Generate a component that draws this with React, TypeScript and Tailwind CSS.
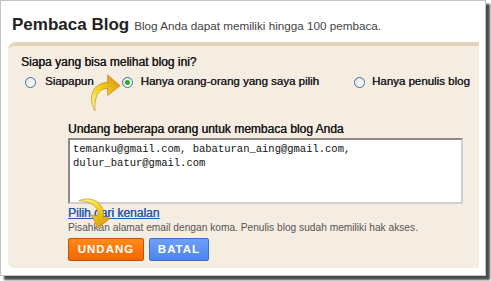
import React from 'react';

const Radio: React.FC<{ checked?: boolean }> = ({ checked }) => (
  <span className="inline-flex items-center justify-center w-[11px] h-[11px] rounded-full border border-[#3c6f9c] bg-gradient-to-br from-[#e6e6e6] to-white">
    {checked && <span className="w-[5px] h-[5px] rounded-full bg-[#2fa82f]" />}
  </span>
);

const CurvedArrow: React.FC<{ className: string; id: string }> = ({ className, id }) => (
  <svg viewBox="0 0 40 46" className={className}>
    <defs>
      <linearGradient id={id} x1="0" y1="1" x2="1" y2="0">
        <stop offset="0" stopColor="#fff7a0" />
        <stop offset="0.45" stopColor="#f2d21a" />
        <stop offset="1" stopColor="#d98a0c" />
      </linearGradient>
    </defs>
    <path
      d="M10 44 C2 30 6 14 24 12 L24 4 L38 16 L24 27 L24 19 C14 19 9 28 10 44 Z"
      fill={`url(#${id})`}
      stroke="#b07a10"
      strokeWidth="0.6"
    />
  </svg>
);

const App: React.FC = () => {
  return (
    <div className="w-[491px] h-[281px] bg-white relative" style={{ fontFamily: '"Liberation Sans", Arial, sans-serif' }}>
      <div className="w-[486px] h-[276px] bg-white border border-[#c4c4c4] shadow-[4px_4px_2px_#4a4a4a] flex flex-col">
        <div className="flex items-baseline gap-[5px] pl-[11px] pt-[11px] h-[41px] whitespace-nowrap">
          <span className="text-[17px] font-bold text-[#222]">Pembaca Blog</span>
          <span className="text-[11.7px] text-[#444]">Blog Anda dapat memiliki hingga 100 pembaca.</span>
        </div>
        <div className="ml-[7px] w-[471px] h-[226px] bg-[#f5ece2] border-t-4 border-[#e3d3bb] rounded-tl-[8px] rounded-bl-[6px] flex flex-col pl-[13px] pt-[9px] whitespace-nowrap">
          <div className="text-[12px] text-[#1a1a1a] leading-[14px] [text-shadow:0.3px_0_0_#1a1a1a]">Siapa yang bisa melihat blog ini?</div>
          <div className="flex items-center mt-[6px] h-[14px] text-[11.5px] text-[#222] [text-shadow:0.3px_0_0_#222]">
            <span className="ml-[4px] flex"><Radio /></span>
            <span className="ml-[9px]">Siapapun</span>
            <span className="ml-[28px] flex"><Radio checked /></span>
            <span className="ml-[8px]">Hanya orang-orang yang saya pilih</span>
            <span className="ml-[35px] flex"><Radio /></span>
            <span className="ml-[7px]">Hanya penulis blog</span>
          </div>
          <div className="flex flex-col ml-[47px] mt-[33px]">
            <div className="text-[12px] text-[#1a1a1a] leading-[14px] [text-shadow:0.3px_0_0_#1a1a1a]">Undang beberapa orang untuk membaca blog Anda</div>
            <div className="mt-[2px] w-[395px] h-[66px] bg-white border-2 border-[#8a8a8a] border-r-[#d0d0d0] border-b-[#d0d0d0] px-[3px] pt-[2px] text-[10.5px] leading-[14px] text-[#111]" style={{ fontFamily: '"Liberation Mono", "Courier New", monospace' }}>
              temanku@gmail.com, babaturan_aing@gmail.com,<br />dulur_batur@gmail.com
            </div>
            <a className="mt-[2px] text-[12px] text-[#2858b0] underline leading-[14px] [text-shadow:0.3px_0_0_#2858b0]">Pilih dari kenalan</a>
            <div className="mt-[1px] text-[10.2px] text-[#555] leading-[14px]">Pisahkan alamat email dengan koma. Penulis blog sudah memiliki hak akses.</div>
            <div className="flex gap-[5px] mt-[3px]">
              <button className="w-[76px] h-[23px] bg-gradient-to-b from-[#ff8a1a] to-[#f26600] border border-[#c85000] rounded-[2px] text-white text-[11.5px] font-bold tracking-[1px]">UNDANG</button>
              <button className="w-[60px] h-[23px] bg-gradient-to-b from-[#6ea0f8] to-[#4a84ee] border border-[#3a6ed0] rounded-[2px] text-white text-[11.5px] font-bold tracking-[1px]">BATAL</button>
            </div>
          </div>
        </div>
      </div>
      <CurvedArrow id="ga1" className="absolute left-[86px] top-[70px] w-[36px] h-[44px]" />
      <CurvedArrow id="ga2" className="absolute left-[78px] top-[192px] w-[34px] h-[40px] rotate-[100deg]" />
    </div>
  );
};

export default App;
